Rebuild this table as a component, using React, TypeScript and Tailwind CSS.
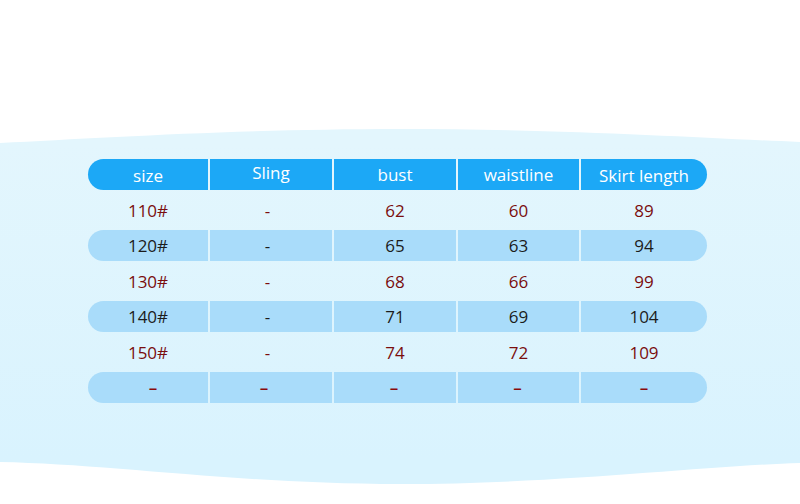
import React from "react";

const cols = "grid grid-cols-[120px_122px_122px_121px_126px] gap-x-[2px]";

type Row = { cells: string[]; band: boolean; color: string; last?: boolean };

const rows: Row[] = [
  { cells: ["110#", "-", "62", "60", "89"], band: false, color: "text-[#7a0d0d]" },
  { cells: ["120#", "-", "65", "63", "94"], band: true, color: "text-[#1c1c1c]" },
  { cells: ["130#", "-", "68", "66", "99"], band: false, color: "text-[#7a0d0d]" },
  { cells: ["140#", "-", "71", "69", "104"], band: true, color: "text-[#1c1c1c]" },
  { cells: ["150#", "-", "74", "72", "109"], band: false, color: "text-[#7a0d0d]" },
  { cells: ["–", "–", "–", "–", "–"], band: true, color: "text-[#8a0a0a] font-semibold", last: true },
];

const headers = ["size", "Sling", "bust", "waistline", "Skirt length"];
const headerPad = ["pt-[3px]", "pb-[3px]", "pt-[1px]", "", "pt-[3px]"];
const lastShift = ["pl-[10px]", "pr-[14px]", "pr-[2px]", "pr-[2px]", ""];

function radius(i: number) {
  if (i === 0) return "rounded-l-[16px]";
  if (i === 4) return "rounded-r-[16px]";
  return "";
}

export default function App() {
  return (
    <div
      className="w-[800px] h-[504px] overflow-hidden bg-white flex flex-col"
      style={{ fontFamily: '"Open Sans", "Noto Sans", sans-serif' }}
    >
      <div className="h-[126px] shrink-0 bg-white" />
      <svg width="800" height="20" viewBox="0 0 800 20" className="block shrink-0">
        <rect width="800" height="20" fill="#e3f6fd" />
        <path d="M0 0 H800 V16 C700 12 560 3 400 3 C240 3 100 12 0 17 Z" fill="#ffffff" />
      </svg>
      <div className="flex-1 bg-gradient-to-b from-[#e3f6fd] to-[#d9f3fe] pt-[13px] pl-[88px]">
        <div className={`${cols} h-[31px]`}>
          {headers.map((h, i) => (
            <div
              key={h}
              className={`bg-[#1ca8f6] text-white text-[17px] flex items-center justify-center ${radius(i)} ${headerPad[i]}`}
            >
              {h}
            </div>
          ))}
        </div>
        {rows.map((r, ri) => (
          <div
            key={ri}
            className={`${cols} ${r.band ? "h-[31px]" : "h-[40px]"}`}
          >
            {r.cells.map((c, ci) => (
              <div
                key={ci}
                className={`flex items-center justify-center text-[17px] ${r.color} ${
                  r.band ? `bg-[#a9dcfa] ${radius(ci)}` : "pt-[2px]"
                } ${r.last ? lastShift[ci] : ""} ${ci === 1 && !r.last ? "pr-[7px]" : ""}`}
              >
                {c}
              </div>
            ))}
          </div>
        ))}
      </div>
      <svg width="800" height="26" viewBox="0 0 800 26" className="block shrink-0">
        <rect width="800" height="26" fill="#ffffff" />
        <path d="M0 0 H800 V3 C700 6 560 24 400 24 C240 24 110 4 0 2 Z" fill="#d9f3fe" />
      </svg>
      <div className="h-[18px] shrink-0 bg-white" />
    </div>
  );
}
